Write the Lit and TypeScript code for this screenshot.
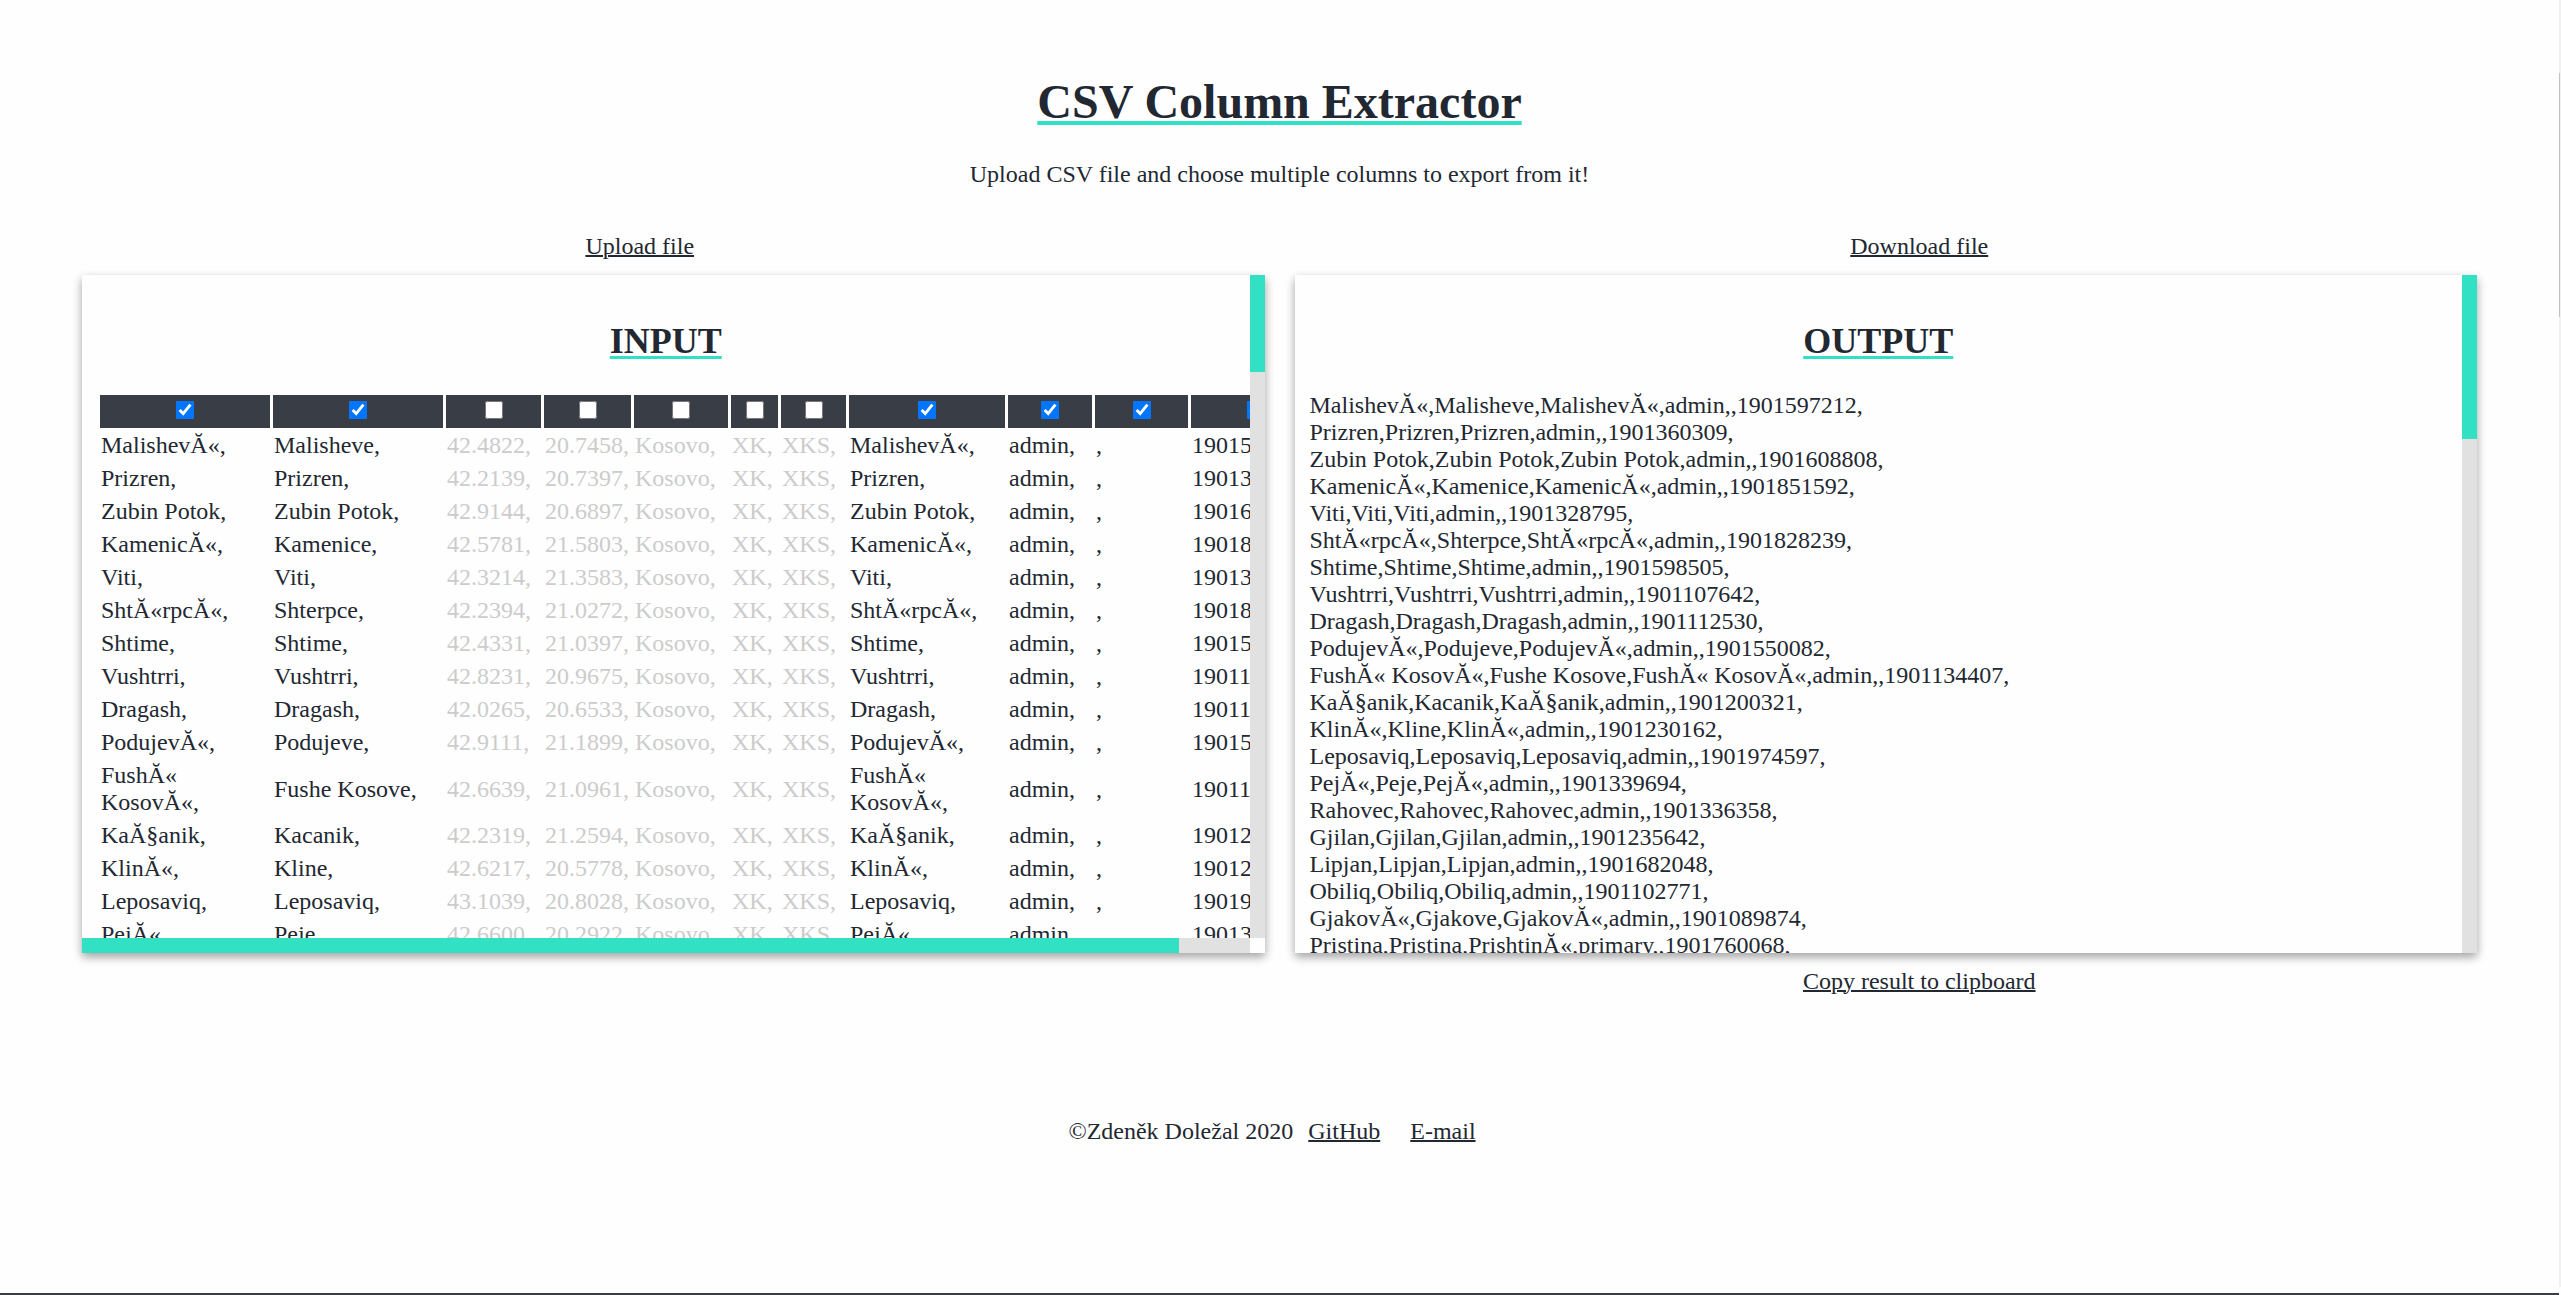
import { LitElement, html, css } from "lit";
import { customElement, state } from "lit/decorators.js";

interface Column {
  width: number;
  on: boolean;
}

const COLUMNS: Column[] = [
  { width: 170, on: true },
  { width: 170, on: true },
  { width: 95, on: false },
  { width: 87, on: false },
  { width: 94, on: false },
  { width: 47, on: false },
  { width: 65, on: false },
  { width: 156, on: true },
  { width: 84, on: true },
  { width: 93, on: true },
  { width: 129, on: true },
];

const CSV = `MalishevĂ«;Malisheve;42.4822;20.7458;Kosovo;XK;XKS;MalishevĂ«;admin;;1901597212
Prizren;Prizren;42.2139;20.7397;Kosovo;XK;XKS;Prizren;admin;;1901360309
Zubin Potok;Zubin Potok;42.9144;20.6897;Kosovo;XK;XKS;Zubin Potok;admin;;1901608808
KamenicĂ«;Kamenice;42.5781;21.5803;Kosovo;XK;XKS;KamenicĂ«;admin;;1901851592
Viti;Viti;42.3214;21.3583;Kosovo;XK;XKS;Viti;admin;;1901328795
ShtĂ«rpcĂ«;Shterpce;42.2394;21.0272;Kosovo;XK;XKS;ShtĂ«rpcĂ«;admin;;1901828239
Shtime;Shtime;42.4331;21.0397;Kosovo;XK;XKS;Shtime;admin;;1901598505
Vushtrri;Vushtrri;42.8231;20.9675;Kosovo;XK;XKS;Vushtrri;admin;;1901107642
Dragash;Dragash;42.0265;20.6533;Kosovo;XK;XKS;Dragash;admin;;1901112530
PodujevĂ«;Podujeve;42.9111;21.1899;Kosovo;XK;XKS;PodujevĂ«;admin;;1901550082
FushĂ« KosovĂ«;Fushe Kosove;42.6639;21.0961;Kosovo;XK;XKS;FushĂ« KosovĂ«;admin;;1901134407
KaĂ§anik;Kacanik;42.2319;21.2594;Kosovo;XK;XKS;KaĂ§anik;admin;;1901200321
KlinĂ«;Kline;42.6217;20.5778;Kosovo;XK;XKS;KlinĂ«;admin;;1901230162
Leposaviq;Leposaviq;43.1039;20.8028;Kosovo;XK;XKS;Leposaviq;admin;;1901974597
PejĂ«;Peje;42.6600;20.2922;Kosovo;XK;XKS;PejĂ«;admin;;1901339694
Rahovec;Rahovec;42.3994;20.6547;Kosovo;XK;XKS;Rahovec;admin;;1901336358
Gjilan;Gjilan;42.4647;21.4669;Kosovo;XK;XKS;Gjilan;admin;;1901235642
Lipjan;Lipjan;42.5242;21.1258;Kosovo;XK;XKS;Lipjan;admin;;1901682048
Obiliq;Obiliq;42.6869;21.0703;Kosovo;XK;XKS;Obiliq;admin;;1901102771
GjakovĂ«;Gjakove;42.3803;20.4308;Kosovo;XK;XKS;GjakovĂ«;admin;;1901089874
Pristina;Pristina;42.6633;21.1622;Kosovo;XK;XKS;PrishtinĂ«;primary;;1901760068`;

const ROWS: string[][] = CSV.split("\n").map((line) => line.split(";"));

@customElement("app-root")
export class AppRoot extends LitElement {
  @state() private columns: Column[] = COLUMNS;

  static styles = css`
    :host {
      display: block;
      background: #fefefe;
      color: #222831;
      font-family: "Liberation Serif", "Times New Roman", serif;
      font-size: 24px;
      line-height: 27px;
    }
    .page {
      display: grid;
      grid-template-columns: 1fr 2px;
      min-height: 100vh;
    }
    .content {
      display: flex;
      flex-direction: column;
      border-bottom: 2px solid #393e46;
    }
    .header {
      padding-top: 74px;
      text-align: center;
    }
    .title {
      margin: 0 0 32px;
      font-size: 48px;
      line-height: 55px;
      text-decoration: underline 4px #32e0c4;
      text-underline-offset: 3px;
    }
    .lead {
      margin: 0;
    }
    .link {
      padding: 0;
      border: 0;
      background: none;
      color: inherit;
      font: inherit;
      cursor: pointer;
      text-decoration: underline 2px;
    }
    .halves {
      display: grid;
      grid-template-columns: 1fr 1fr;
      margin-top: 45px;
    }
    .half {
      display: grid;
      grid-template-rows: 27px 678px 27px;
      row-gap: 15px;
      min-width: 0;
      text-align: center;
    }
    .half-in .panel {
      margin-left: 82px;
      margin-right: 15px;
    }
    .half-out .panel {
      margin-left: 15px;
      margin-right: 82px;
    }
    .panel {
      display: grid;
      grid-template-columns: minmax(0, 1fr) 15px;
      grid-template-rows: minmax(0, 1fr) auto;
      background: #fefefe;
      box-shadow: 0 4px 9px rgba(0, 0, 0, 0.16), 0 4px 9px rgba(0, 0, 0, 0.23);
    }
    .view {
      box-sizing: border-box;
      padding: 16px 15px;
      overflow: auto;
      scrollbar-width: none;
      text-align: left;
    }
    .track {
      background: #e1e1e1;
    }
    .thumb {
      background: #32e0c4;
    }
    .track-x {
      height: 15px;
    }
    .track-x .thumb {
      width: 94%;
      height: 100%;
    }
    .half-in .track-y .thumb {
      height: 97px;
    }
    .half-out .track-y .thumb {
      height: 164px;
    }
    .heading {
      margin: 30px 0;
      font-size: 36px;
      line-height: 41px;
      text-align: center;
      text-decoration: underline 3px #32e0c4;
      text-underline-offset: 3px;
    }
    .table {
      width: 1226px;
      table-layout: fixed;
      border-spacing: 3px;
      border-collapse: separate;
    }
    .pick {
      height: 33px;
      padding: 0;
      background: #393e46;
      line-height: 0;
      text-align: center;
    }
    .box {
      width: 18px;
      height: 18px;
      margin: 0 0 3px;
      vertical-align: middle;
    }
    .cell {
      padding: 1px 0 2px 1px;
      text-align: left;
    }
    .off {
      color: #cccccc;
    }
    .footer {
      display: flex;
      justify-content: center;
      margin-top: 123px;
    }
    .footer .link {
      margin: 0 15px;
    }
    .page-track {
      margin-bottom: 8px;
      padding-top: 73px;
      background: #f1f1f1;
    }
    .page-thumb {
      width: 1px;
      height: 244px;
      background: #c1c1c1;
    }
  `;

  private toggle(index: number) {
    this.columns = this.columns.map((c, i) =>
      i === index ? { ...c, on: !c.on } : c,
    );
  }

  private outputLine(row: string[]) {
    return row
      .filter((_, i) => this.columns[i].on)
      .map((v) => v + ",")
      .join("");
  }

  render() {
    return html`
      <div class="page">
        <div class="content">
          <header class="header">
            <h1 class="title">CSV Column Extractor</h1>
            <p class="lead">
              Upload CSV file and choose multiple columns to export from it!
            </p>
          </header>
          <main class="halves">
            <section class="half half-in">
              <div><button class="link" type="button">Upload file</button></div>
              <div class="panel">
                <div class="view">
                  <h2 class="heading">INPUT</h2>
                  <table class="table">
                    <colgroup>
                      ${this.columns.map(
                        (c) => html`<col style="width:${c.width}px" />`,
                      )}
                    </colgroup>
                    <thead>
                      <tr>
                        ${this.columns.map(
                          (c, i) => html`<th class="pick" scope="col">
                            <input
                              class="box"
                              type="checkbox"
                              aria-label="Column ${i + 1}"
                              .checked=${c.on}
                              @change=${() => this.toggle(i)}
                            />
                          </th>`,
                        )}
                      </tr>
                    </thead>
                    <tbody>
                      ${ROWS.map(
                        (row) => html`<tr>
                          ${row.map(
                            (v, i) =>
                              html`<td
                                class="cell ${this.columns[i].on ? "" : "off"}"
                              >${v},</td>`,
                          )}
                        </tr>`,
                      )}
                    </tbody>
                  </table>
                </div>
                <div class="track track-y"><div class="thumb"></div></div>
                <div class="track track-x"><div class="thumb"></div></div>
              </div>
            </section>
            <section class="half half-out">
              <div>
                <a class="link" href="#download">Download file</a>
              </div>
              <div class="panel">
                <div class="view">
                  <h2 class="heading">OUTPUT</h2>
                  ${ROWS.map((row) => html`<div>${this.outputLine(row)}</div>`)}
                </div>
                <div class="track track-y"><div class="thumb"></div></div>
              </div>
              <div>
                <button class="link" type="button">
                  Copy result to clipboard
                </button>
              </div>
            </section>
          </main>
          <footer class="footer">
            <span>©Zdeněk Doležal 2020</span>
            <a class="link" href="#github">GitHub</a>
            <a class="link" href="#email">E-mail</a>
          </footer>
        </div>
        <div class="page-track"><div class="page-thumb"></div></div>
      </div>
    `;
  }
}
